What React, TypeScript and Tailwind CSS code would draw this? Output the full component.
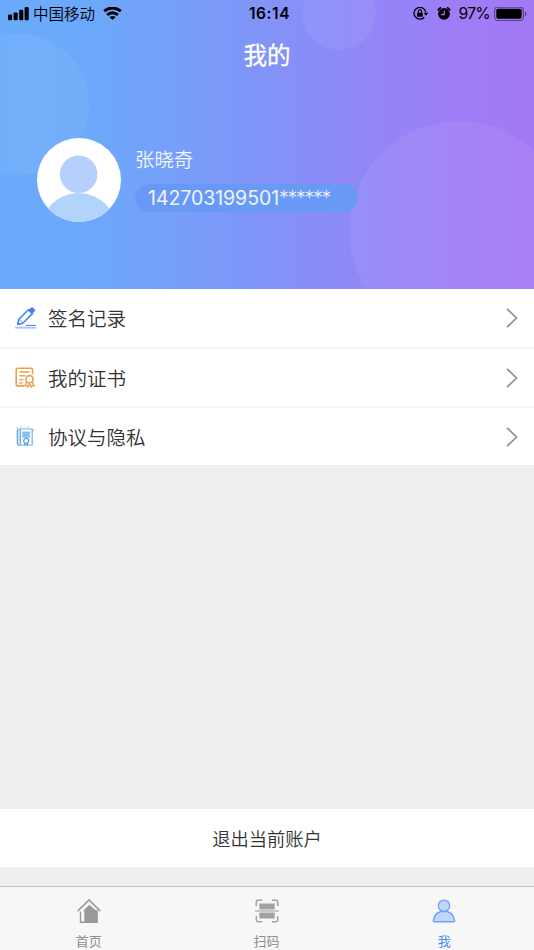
import React from 'react';

const cjk = "font-['Inter','Noto_Sans_CJK_SC',sans-serif]";

function StatusBar() {
  return (
    <div className="relative flex h-7 items-center pl-2 pr-[7px] text-black">
      <svg width="21" height="14" viewBox="0 0 21 14">
        <rect x="0" y="7.6" width="4.1" height="5.6" rx="1.2" />
        <rect x="5.6" y="5.4" width="4.1" height="7.8" rx="1.2" />
        <rect x="11.2" y="2.8" width="4.1" height="10.4" rx="1.2" />
        <rect x="16.6" y="0" width="4.1" height="13.2" rx="1.2" />
      </svg>
      <span className="ml-1 pt-0.5 text-[15.5px] font-[350] leading-7">中国移动</span>
      <svg className="ml-2" width="19" height="14" viewBox="0 0 19 14" fill="none" stroke="#000" strokeWidth="2.9">
        <path d="M1.2 4.2Q9.5-2.4 17.8 4.2" />
        <path d="M4.1 7.9Q9.5 3.5 14.9 7.9" />
        <path d="M6.4 10.1Q9.5 7.7 12.6 10.1L9.5 13Z" fill="#000" stroke="none" />
      </svg>
      <span className="absolute left-[249px] top-0 text-[15.5px] font-semibold leading-7 tracking-[0.55px]">16:14</span>
      <svg className="ml-auto" width="16" height="14" viewBox="0 0 16 14" fill="none" stroke="#000">
        <path d="M11.3 10.2A5.9 5.9 0 1 1 12.7 5.1" strokeWidth="1.3" />
        <path d="M10.6 5.7h4.8l-2.4 3z" fill="#000" stroke="none" />
        <rect x="4.1" y="5.7" width="5.6" height="4.1" rx=".5" fill="#000" stroke="none" />
        <path d="M5.3 6V4.5a1.6 1.6 0 0 1 3.2 0V6" strokeWidth="1.1" />
      </svg>
      <svg className="ml-2" width="14" height="14" viewBox="0 0 14 14">
        <circle cx="7" cy="6.9" r="5.9" />
        <path d="M1.3 2.7L3.3.9M12.7 2.7L10.7.9" stroke="#000" strokeWidth="1.8" strokeLinecap="round" />
        <path d="M7.2 3.7v3.9H4.1" fill="none" stroke="#a37ef6" strokeWidth="1.2" />
      </svg>
      <span className="ml-2 text-[15.7px] leading-7 tracking-[-0.75px]">97%</span>
      <svg className="ml-1" width="33" height="15" viewBox="0 0 33 15">
        <rect x=".6" y=".1" width="28.8" height="13.4" rx="3.2" fill="none" stroke="#59418c" strokeWidth="1.1" />
        <rect x="2.3" y="1.8" width="25.4" height="10" rx="1.8" />
        <path d="M30.8 4.5v4.6q1.8-.7 1.8-2.3T30.8 4.5z" fill="#59418c" />
      </svg>
    </div>
  );
}

function Header() {
  return (
    <header className="relative h-[289px] overflow-hidden bg-[linear-gradient(90deg,#6aabfb_0%,#6ca8fa_18%,#7c98f8_43%,#8d8af7_64%,#9d7ef7_83%,#a478f4_100%)]">
      <div className="absolute left-[-52px] top-[34px] size-[141px] rounded-full bg-white/6" />
      <div className="absolute left-[302px] top-[-24px] size-[74px] rounded-full bg-white/6" />
      <div className="absolute left-[349px] top-[121px] size-[220px] rounded-full bg-white/6" />
      <div className="relative">
        <StatusBar />
        <h1 className="pt-px text-center text-[23.5px] font-normal leading-[53px] text-white [-webkit-text-stroke:0.3px_white]">我的</h1>
        <div className="flex items-center pl-[37px] pt-[55.5px]">
          <svg width="84" height="84" viewBox="0 0 84 84">
            <defs>
              <clipPath id="avatar"><circle cx="42" cy="42" r="42" /></clipPath>
            </defs>
            <g clipPath="url(#avatar)">
              <rect width="84" height="84" fill="#fff" />
              <circle cx="41.6" cy="36.3" r="18.8" fill="#b6d0fd" />
              <circle cx="41.6" cy="93.5" r="38.4" fill="#b1d3fc" />
            </g>
          </svg>
          <div className="ml-3.5">
            <div className="text-[19.4px] font-[350] leading-[25px] text-white/90">张晓奇</div>
            <div className="mt-[11px] flex h-7 w-[223px] items-center rounded-full bg-[linear-gradient(90deg,#6998f6,#699bf5)] pl-[13px] pt-0.5 font-['Inter',sans-serif] text-[19.5px] text-white/90">
              <span className="tracking-[-0.05px]">142703199501</span>
              <span className="font-light tracking-[-1.3px]">******</span>
            </div>
          </div>
        </div>
      </div>
    </header>
  );
}

function PenIcon() {
  return (
    <svg width="22" height="22" viewBox="0 0 22 22" fill="none" stroke="#4284f4" strokeWidth="1.5" strokeLinejoin="round">
      <path d="M2.7 17.4l1.1-5L13.6 2.5l4 3.9-9.8 9.8z" />
      <path d="M3.8 12.4l4 3.8" strokeWidth=".9" />
      <path d="M13 3.4L16.2.6q1-.7 1.9.2l1.7 1.8q.7.8-.1 1.6l-3 2.9z" fill="#4284f4" stroke="none" />
      <path d="M2.2 17.7l.7-3.2 2.3 2.5z" fill="#4284f4" stroke="none" />
      <path d="M11 18.4h10" strokeWidth="1" />
      <path d="M.2 20.7h21.1" stroke="#a5c7fb" strokeWidth="1.9" />
    </svg>
  );
}

function CertificateIcon() {
  return (
    <svg width="22" height="22" viewBox="0 0 22 22" fill="none" stroke="#eba04a" strokeWidth="1.6">
      <path d="M9.3 18.9H2.6Q1.2 18.9 1.2 17.5V2.5Q1.2 1.2 2.6 1.2h13.6Q17.5 1.2 17.5 2.5v5" />
      <path d="M4.4 5h10M4.4 8.8h6M4.4 12.6h4.2M4.4 16h3" strokeWidth="1.4" />
      <circle cx="14.5" cy="12.2" r="3.6" />
      <path d="M12.1 14.9L9.9 18.8l2-.2 1 1.6 1.6-3.9 1.7 3.9.9-1.6 2.2.2-2.3-3.9" strokeLinejoin="round" strokeWidth="1.4" />
    </svg>
  );
}

function AgreementIcon() {
  return (
    <svg width="22" height="22" viewBox="0 0 22 22" fill="none" stroke="#62a6df">
      <path d="M5 19.2H3.8Q2.3 18.9 2.3 17.4V4.7Q2.3 3 4 3h1" strokeWidth="1.2" />
      <path d="M4 3v16" stroke="#add2f0" strokeWidth="1.4" />
      <path d="M5.5 3h11.7v16H5.5z" stroke="#79b3e4" strokeWidth="1.2" />
      <path d="M.9 1.7h2M5 1.2h2M9 1.2h1M12 1.2h2M17.8 4.7h2" stroke="#a5cced" />
      <rect x="7.2" y="5.5" width="7.9" height="6.3" fill="#8fc0ec" stroke="none" />
      <circle cx="11.2" cy="14.8" r="2.5" fill="#fff" strokeWidth="1.3" />
      <path d="M9.7 17v2.6l1.5-1.2 1.5 1.2V17" />
    </svg>
  );
}

function Row({ icon, label, size }: { icon: React.ReactNode; label: string; size: string }) {
  return (
    <div className={`flex items-center pl-[15px] pr-4 ${size}`}>
      {icon}
      <span className="ml-[11px] pt-0.5 text-[19.5px] font-[350] leading-[30px] text-[#333]">{label}</span>
      <svg className="ml-auto" width="12" height="20" viewBox="0 0 12 20" fill="none" stroke="#929292" strokeWidth="1.7">
        <path d="M1 .8L10.5 10 1 19.2" />
      </svg>
    </div>
  );
}

function HomeIcon() {
  return (
    <svg className="shrink-0" width="24" height="25" viewBox="0 0 24 25">
      <path d="M.7 12.1L12 .9l11.3 11.2" fill="none" stroke="#999" strokeWidth="1.5" />
      <path d="M3.5 12.5v10.8h16.6V11" fill="none" stroke="#999" strokeWidth="1.4" />
      <path d="M7.4 23.6V12.2H5.8L12.3 5.7l7.9 6.8v11.1z" fill="#999" />
    </svg>
  );
}

function ScanIcon() {
  return (
    <svg className="shrink-0" width="24" height="25" viewBox="0 0 24 25" fill="none" stroke="#a1a1a1" strokeWidth="1.5">
      <path d="M1.3 7V2.9q0-1.6 1.6-1.6h4.3M16.8 1.3h4.3q1.6 0 1.6 1.6V7M1.3 17v4.1q0 1.6 1.6 1.6h4.3M16.8 22.7h4.3q1.6 0 1.6-1.6V17" />
      <path d="M4.3 4.6h15.4v5.8H4.3zM4.3 13.6h15.4v5.8H4.3z" fill="#a1a1a1" stroke="none" />
      <path d="M0 12h24" strokeWidth="1.1" />
    </svg>
  );
}

function PersonIcon() {
  return (
    <svg className="shrink-0" width="24" height="25" viewBox="0 0 24 25" fill="#c1d7f9" stroke="#6ba2f8" strokeWidth="1.4">
      <path d="M1.4 21.7q1.2-9.4 10.6-9.4t10.6 9.4q.1 1-.9 1H2.3q-1 0-.9-1z" />
      <circle cx="12" cy="6.8" r="5.7" />
    </svg>
  );
}

function Tab({ icon, label, active = false }: { icon: React.ReactNode; label: string; active?: boolean }) {
  return (
    <div className={`flex flex-1 flex-col items-center pt-3 ${active ? 'pr-px text-[#4d8df6]' : 'text-[#8e8e8e]'}`}>
      {icon}
      <span className="mt-2 text-[13px] leading-[18px]">{label}</span>
    </div>
  );
}

export default function App() {
  return (
    <div className={`flex h-[950px] w-[534px] flex-col overflow-hidden bg-[#efefef] ${cjk}`}>
      <Header />
      <main className="flex flex-1 flex-col">
        <div className="bg-white">
          <Row icon={<PenIcon />} label="签名记录" size="h-[60px] border-b-2 border-[#f6f6f6]" />
          <Row icon={<CertificateIcon />} label="我的证书" size="h-[59px] border-b-2 border-[#f6f6f6]" />
          <Row icon={<AgreementIcon />} label="协议与隐私" size="h-[57px]" />
        </div>
        <button className="mb-[19px] mt-auto h-[58px] bg-white pt-[3px] text-[18.3px] font-[350] text-[#333]">退出当前账户</button>
      </main>
      <nav className="flex h-16 border-t border-[#c4c4c4] bg-[#f7f7f7]">
        <Tab icon={<HomeIcon />} label="首页" />
        <Tab icon={<ScanIcon />} label="扫码" />
        <Tab icon={<PersonIcon />} label="我" active />
      </nav>
    </div>
  );
}
